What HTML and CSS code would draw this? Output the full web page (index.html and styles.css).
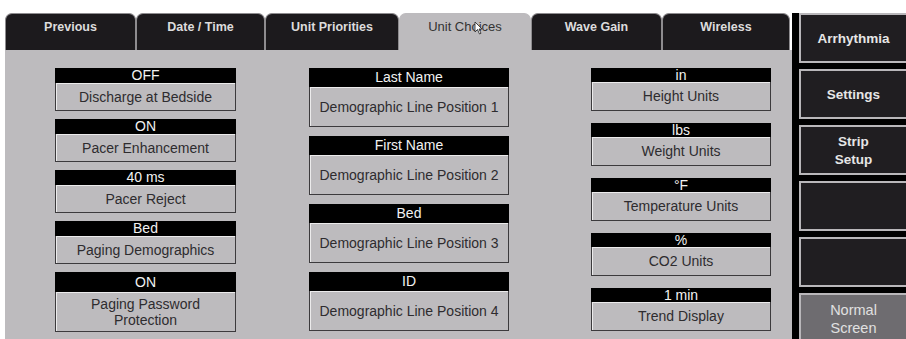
FILE: index.html
```html
<!DOCTYPE html>
<html lang="en">
  <head>
    <meta charset="UTF-8" />
    <title>Unit Choices</title>
    <link rel="stylesheet" href="styles.css">
  </head>
  <body>
    <div class="screen">
      <div class="main">
        <div class="tabs">
          <div class="tab tab-prev">Previous</div>
          <div class="tab tab-date">Date / Time</div>
          <div class="tab tab-prio">Unit Priorities</div>
          <div class="tab tab-active">
            Unit Choices
            <svg class="cursor" width="9" height="14" viewBox="0 0 9 14">
              <path d="M1 1 L1 11 L3.5 8.5 L5.5 13 L7 12.3 L5 8 L8 8 Z" fill="#fff" stroke="#222" stroke-width="0.8"/>
            </svg>
          </div>
          <div class="tab tab-wave">Wave Gain</div>
          <div class="tab tab-wire">Wireless</div>
        </div>

        <div class="panel">
          <div class="col col-left">
            <div class="item">
              <div class="value">OFF</div>
              <div class="label">Discharge at Bedside</div>
            </div>
            <div class="item">
              <div class="value">ON</div>
              <div class="label">Pacer Enhancement</div>
            </div>
            <div class="item">
              <div class="value">40 ms</div>
              <div class="label">Pacer Reject</div>
            </div>
            <div class="item">
              <div class="value">Bed</div>
              <div class="label">Paging Demographics</div>
            </div>
            <div class="item item-tall">
              <div class="value">ON</div>
              <div class="label">Paging Password<br>Protection</div>
            </div>
          </div>

          <div class="col col-mid">
            <div class="item">
              <div class="value">Last Name</div>
              <div class="label">Demographic Line Position 1</div>
            </div>
            <div class="item">
              <div class="value">First Name</div>
              <div class="label">Demographic Line Position 2</div>
            </div>
            <div class="item">
              <div class="value">Bed</div>
              <div class="label">Demographic Line Position 3</div>
            </div>
            <div class="item">
              <div class="value">ID</div>
              <div class="label">Demographic Line Position 4</div>
            </div>
          </div>

          <div class="col col-right">
            <div class="item">
              <div class="value">in</div>
              <div class="label">Height Units</div>
            </div>
            <div class="item">
              <div class="value">lbs</div>
              <div class="label">Weight Units</div>
            </div>
            <div class="item">
              <div class="value">°F</div>
              <div class="label">Temperature Units</div>
            </div>
            <div class="item">
              <div class="value">%</div>
              <div class="label">CO2 Units</div>
            </div>
            <div class="item">
              <div class="value">1 min</div>
              <div class="label">Trend Display</div>
            </div>
          </div>
        </div>
      </div>

      <div class="side">
        <div class="side-btn">Arrhythmia</div>
        <div class="side-btn">Settings</div>
        <div class="side-btn">Strip<br>Setup</div>
        <div class="side-btn"></div>
        <div class="side-btn"></div>
        <div class="side-btn side-normal">Normal<br>Screen</div>
      </div>
    </div>
  </body>
</html>
```

FILE: styles.css
```css
body {
  margin: 0;
  background: #fff;
  font-family: "Liberation Sans", Arial, sans-serif;
}
.screen {
  display: flex;
  width: 906px;
  height: 339px;
  padding-top: 13px;
  box-sizing: border-box;
  overflow: hidden;
}
.main {
  display: flex;
  flex-direction: column;
  width: 787px;
  margin-left: 5px;
}
.tabs {
  display: flex;
  height: 37px;
  background: #fff;
}
.tab {
  position: relative;
  background: #1c1a1d;
  color: #dcdcdc;
  font-size: 12.5px;
  font-weight: bold;
  text-align: center;
  line-height: 16px;
  padding-top: 5px;
  box-sizing: border-box;
  border: 1px solid #8e8c8f;
  border-bottom: none;
  border-radius: 7px 7px 0 0;
}
.tab-prev { width: 131px; }
.tab-date { width: 129px; }
.tab-prio { width: 134px; }
.tab-active {
  width: 132px;
  background: #bdbbbe;
  color: #333;
  font-weight: normal;
  font-size: 13px;
  border-color: #bdbbbe;
}
.tab-wave { width: 131px; }
.tab-wire { width: 128px; }
.cursor {
  position: absolute;
  left: 74px;
  top: 7px;
}
.panel {
  flex: 1;
  display: flex;
  background: #bdbbbe;
  padding: 18px 0 0 50px;
  column-gap: 73px;
}
.col {
  display: flex;
  flex-direction: column;
}
.col-left {
  width: 181px;
  gap: 8px;
}
.col-mid {
  width: 200px;
  gap: 9px;
}
.col-right {
  width: 180px;
  gap: 12px;
  margin-left: 9px;
}
.item {
  display: flex;
  flex-direction: column;
}
.value {
  background: #000;
  color: #f2f2f2;
  font-size: 14px;
  text-align: center;
  height: 15px;
  line-height: 15px;
}
.label {
  display: flex;
  align-items: center;
  justify-content: center;
  text-align: center;
  height: 28px;
  box-sizing: border-box;
  border: 1px solid #3c3a3d;
  border-top: none;
  box-shadow: inset 1px 1px 0 #ecebec;
  color: #2e2c2f;
  font-size: 14px;
  line-height: 16px;
}
.col-left .item-tall .value {
  height: 20px;
  line-height: 20px;
}
.col-left .item-tall .label {
  height: 40px;
}
.col-mid .value {
  height: 19px;
  line-height: 19px;
}
.col-mid .label {
  height: 40px;
}
.col-right .value {
  height: 14px;
  line-height: 14px;
}
.col-right .label {
  height: 29px;
}
.side {
  display: flex;
  flex-direction: column;
  gap: 6px;
  width: 114px;
  background: #000;
  padding-left: 7px;
  box-sizing: border-box;
}
.side-btn {
  flex: none;
  height: 50px;
  box-sizing: border-box;
  border: 2px solid #b9b7ba;
  border-right: none;
  background: #201e21;
  color: #e6e6e6;
  font-size: 13.5px;
  font-weight: bold;
  line-height: 18px;
  padding-top: 2px;
  display: flex;
  align-items: center;
  justify-content: center;
  text-align: center;
}
.side-normal {
  background: #6e6c70;
  color: #e0e0e0;
  font-weight: normal;
  font-size: 14.5px;
}
```
